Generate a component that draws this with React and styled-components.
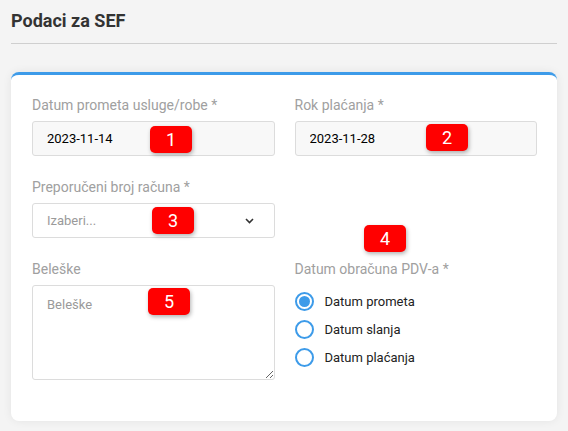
import React from "react";
import styled, { createGlobalStyle } from "styled-components";

const GlobalStyle = createGlobalStyle`
  body {
    margin: 0;
    background: #f4f4f4;
    font-family: Roboto, "Liberation Sans", sans-serif;
  }
`;

const Page = styled.div`
  padding: 9px 11px 10px;
`;

const Title = styled.h2`
  margin: 0;
  font-size: 18px;
  line-height: 24px;
  font-weight: 700;
  color: #333;
`;

const Divider = styled.hr`
  margin: 10px 0 0;
  border: none;
  border-top: 1px solid #cfcfcf;
`;

const Card = styled.div`
  position: relative;
  margin-top: 28px;
  background: #fff;
  border-top: 3px solid #3d9be9;
  border-radius: 8px;
  box-shadow: 0 0 10px rgba(0, 0, 0, 0.07);
  padding: 20px 20px 41px 21px;
  display: grid;
  grid-template-columns: 1fr 1fr;
  column-gap: 20px;
  row-gap: 21px;
`;

const Field = styled.div`
  display: flex;
  flex-direction: column;
`;

const Label = styled.label`
  font-size: 14px;
  line-height: 20px;
  color: #a0a0a0;
  margin-bottom: 6px;
`;

const Input = styled.input`
  box-sizing: border-box;
  height: 35px;
  padding: 0 14px;
  border: 1px solid #dcdcdc;
  border-radius: 3px;
  background: ${(p) => (p.readOnly ? "#f8f8f8" : "#fff")};
  font-family: inherit;
  font-size: 13px;
  color: #000;
  outline: none;
`;

const SelectBox = styled.div`
  box-sizing: border-box;
  height: 35px;
  padding: 0 20px 0 14px;
  border: 1px solid #dcdcdc;
  border-radius: 3px;
  background: #fff;
  display: flex;
  align-items: center;
  justify-content: space-between;
  font-size: 13px;
  color: #9a9a9a;
`;

const TextArea = styled.textarea`
  box-sizing: border-box;
  height: 95px;
  padding: 10px 14px;
  border: 1px solid #dcdcdc;
  border-radius: 3px;
  font-family: inherit;
  font-size: 13px;
  line-height: 18px;
  color: #111;
  outline: none;
  resize: vertical;
  &::placeholder {
    color: #9a9a9a;
  }
`;

const RadioList = styled.div`
  margin-top: 2px;
  display: flex;
  flex-direction: column;
`;

const RadioRow = styled.label`
  height: 28px;
  display: flex;
  align-items: center;
  gap: 11px;
  font-size: 13px;
  color: #222;
`;

const RadioCircle = styled.span`
  box-sizing: border-box;
  width: 19px;
  height: 19px;
  border: 2px solid #3d9be9;
  border-radius: 50%;
  display: flex;
  align-items: center;
  justify-content: center;
  &::after {
    content: "";
    width: 11px;
    height: 11px;
    border-radius: 50%;
    background: ${(p) => (p.checked ? "#3d9be9" : "transparent")};
  }
`;

const Badge = styled.div`
  position: absolute;
  width: 42px;
  height: 27px;
  border-radius: 5px;
  background: #ff0000;
  color: #fff;
  font-size: 18px;
  line-height: 27px;
  text-align: center;
  box-shadow: 1px 2px 4px rgba(0, 0, 0, 0.3);
`;

const Chevron = () => (
  <svg width="9" height="6" viewBox="0 0 9 6">
    <path d="M1 1l3.5 3.5L8 1" fill="none" stroke="#333" strokeWidth="1.6" />
  </svg>
);

const radios = ["Datum prometa", "Datum slanja", "Datum plaćanja"];

const badges = [
  { n: 1, left: 139, top: 51 },
  { n: 2, left: 415, top: 49 },
  { n: 3, left: 141, top: 132 },
  { n: 4, left: 353, top: 150 },
  { n: 5, left: 137, top: 213 },
];

export default function App() {
  return (
    <Page>
      <GlobalStyle />
      <Title>Podaci za SEF</Title>
      <Divider />
      <Card>
        <Field>
          <Label>Datum prometa usluge/robe *</Label>
          <Input readOnly value="2023-11-14" />
        </Field>
        <Field>
          <Label>Rok plaćanja *</Label>
          <Input readOnly value="2023-11-28" />
        </Field>
        <Field>
          <Label>Preporučeni broj računa *</Label>
          <SelectBox>
            <span>Izaberi...</span>
            <Chevron />
          </SelectBox>
        </Field>
        <div />
        <Field>
          <Label>Beleške</Label>
          <TextArea placeholder="Beleške" />
        </Field>
        <Field>
          <Label>Datum obračuna PDV-a *</Label>
          <RadioList>
            {radios.map((r, i) => (
              <RadioRow key={r}>
                <RadioCircle checked={i === 0} />
                {r}
              </RadioRow>
            ))}
          </RadioList>
        </Field>
        {badges.map((b) => (
          <Badge key={b.n} style={{ left: b.left, top: b.top }}>
            {b.n}
          </Badge>
        ))}
      </Card>
    </Page>
  );
}
